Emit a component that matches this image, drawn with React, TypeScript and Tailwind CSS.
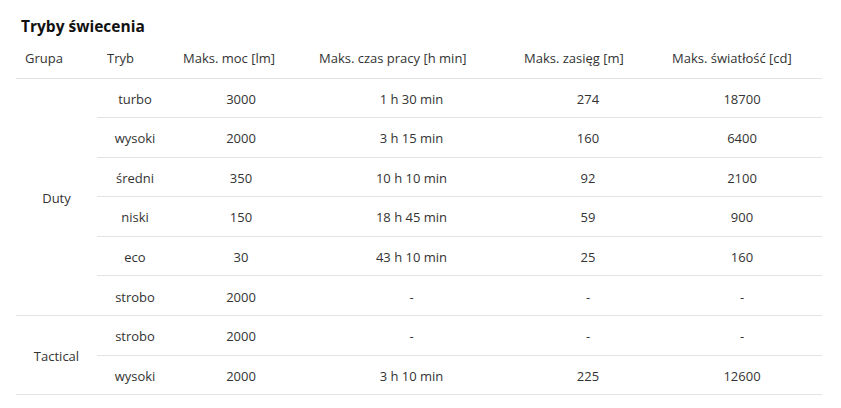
import React from "react";

type Row = {
  tryb: string;
  moc: string;
  czas: string;
  zasieg: string;
  swiatlosc: string;
};

type Group = {
  name: string;
  rows: Row[];
};

const groups: Group[] = [
  {
    name: "Duty",
    rows: [
      { tryb: "turbo", moc: "3000", czas: "1 h 30 min", zasieg: "274", swiatlosc: "18700" },
      { tryb: "wysoki", moc: "2000", czas: "3 h 15 min", zasieg: "160", swiatlosc: "6400" },
      { tryb: "średni", moc: "350", czas: "10 h 10 min", zasieg: "92", swiatlosc: "2100" },
      { tryb: "niski", moc: "150", czas: "18 h 45 min", zasieg: "59", swiatlosc: "900" },
      { tryb: "eco", moc: "30", czas: "43 h 10 min", zasieg: "25", swiatlosc: "160" },
      { tryb: "strobo", moc: "2000", czas: "-", zasieg: "-", swiatlosc: "-" },
    ],
  },
  {
    name: "Tactical",
    rows: [
      { tryb: "strobo", moc: "2000", czas: "-", zasieg: "-", swiatlosc: "-" },
      { tryb: "wysoki", moc: "2000", czas: "3 h 10 min", zasieg: "225", swiatlosc: "12600" },
    ],
  },
];

const headers = [
  "Grupa",
  "Tryb",
  "Maks. moc [lm]",
  "Maks. czas pracy [h min]",
  "Maks. zasięg [m]",
  "Maks. światłość [cd]",
];

const App = () => {
  return (
    <div
      className="w-[841px] h-[408px] bg-white text-[#333] pt-[14px]"
      style={{ fontFamily: '"Open Sans", "Noto Sans", sans-serif' }}
    >
      <h2 className="ml-[21px] text-[15.5px] font-bold text-[#111] leading-[24px]">
        Tryby świecenia
      </h2>
      <table className="ml-[16px] w-[806px] table-fixed border-collapse text-[13px] mt-[2px]">
        <colgroup>
          <col className="w-[81px]" />
          <col className="w-[76px]" />
          <col className="w-[136px]" />
          <col className="w-[205px]" />
          <col className="w-[148px]" />
          <col className="w-[160px]" />
        </colgroup>
        <thead>
          <tr className="h-[38px] border-b border-[#e3e3e3]">
            {headers.map((h, i) => (
              <th
                key={h}
                className={
                  "text-left font-normal pr-2 align-middle " +
                  (i === 0 ? "pl-[9px]" : "pl-[10px]")
                }
              >
                {h}
              </th>
            ))}
          </tr>
        </thead>
        <tbody>
          {groups.map((g) =>
            g.rows.map((r, i) => {
              const last = i === g.rows.length - 1;
              const cell =
                "text-center pt-[3px] " + (last ? "" : "border-b border-[#e3e3e3]");
              return (
                <tr
                  key={g.name + r.tryb + i}
                  className={"h-[39.6px] " + (last ? "border-b border-[#e3e3e3]" : "")}
                >
                  {i === 0 && (
                    <td rowSpan={g.rows.length} className="text-center align-middle pt-[3px]">
                      {g.name}
                    </td>
                  )}
                  <td className={cell}>{r.tryb}</td>
                  <td className={cell}>{r.moc}</td>
                  <td className={cell}>{r.czas}</td>
                  <td className={cell}>{r.zasieg}</td>
                  <td className={cell}>{r.swiatlosc}</td>
                </tr>
              );
            })
          )}
        </tbody>
      </table>
    </div>
  );
};

export default App;
